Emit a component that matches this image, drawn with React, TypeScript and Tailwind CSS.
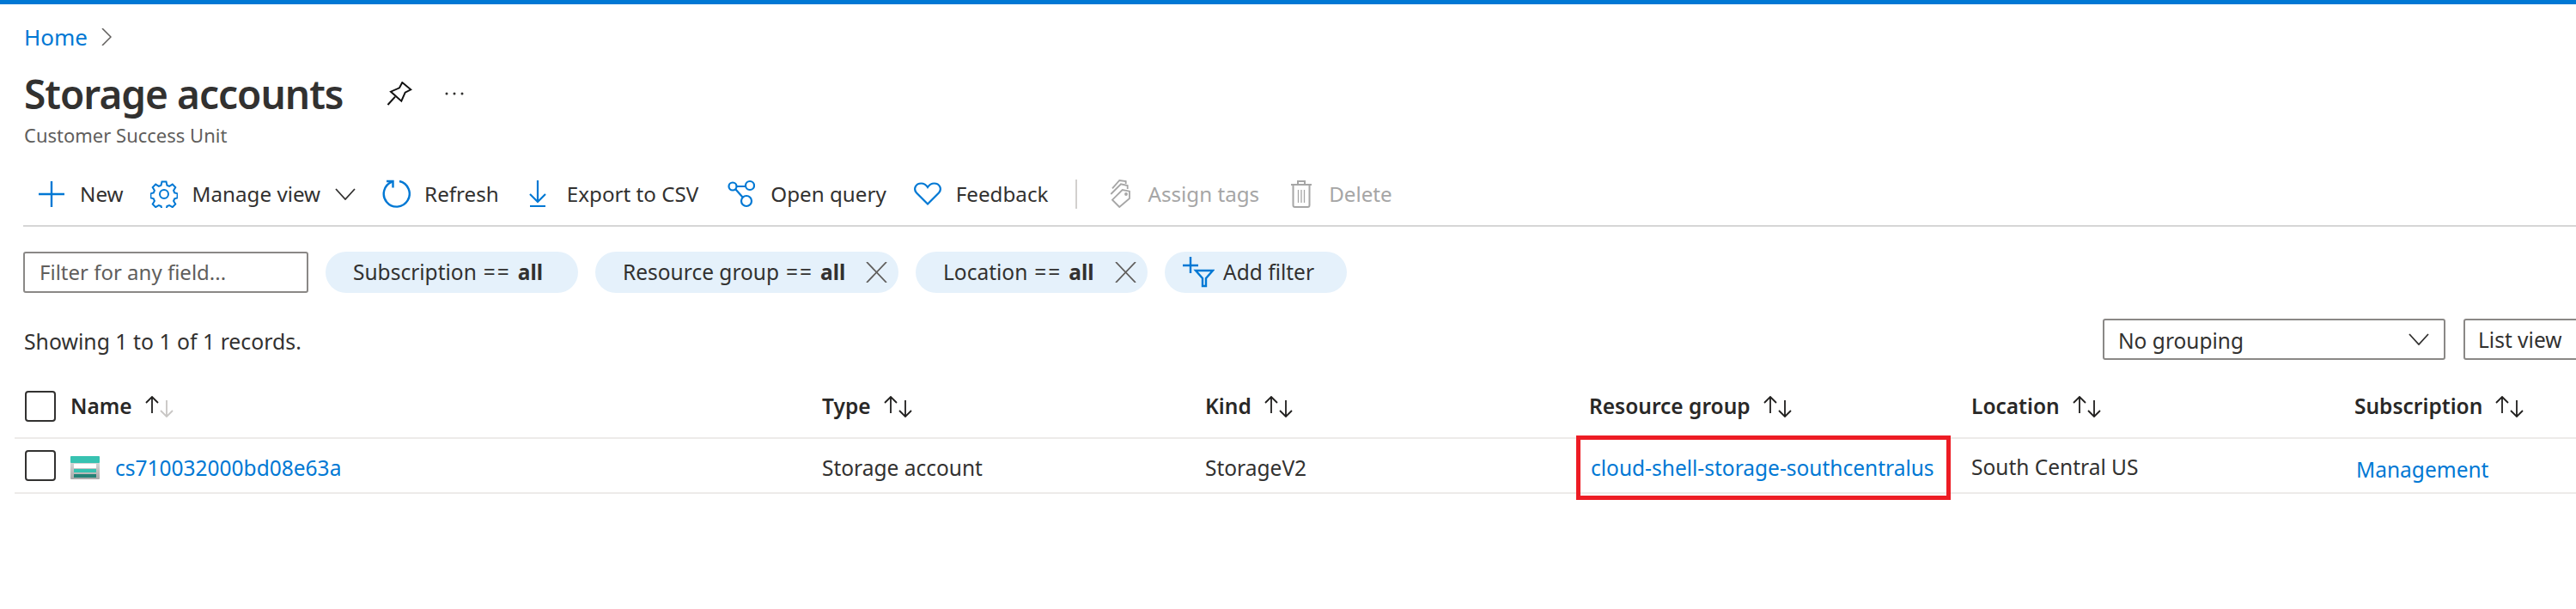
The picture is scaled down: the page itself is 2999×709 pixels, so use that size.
import type { ReactNode } from 'react';

const font = "font-['Noto_Sans','Open_Sans',sans-serif]";

function PlusIcon() {
  return (
    <svg width="30" height="30" viewBox="0 0 30 30" fill="none" stroke="#0078d4" strokeWidth="2.4">
      <path d="M15 0v30M0 15h30" />
    </svg>
  );
}

function GearIcon() {
  return (
    <svg width="32" height="32" viewBox="0 0 32 32" fill="none" stroke="#0078d4" strokeWidth="2">
      <circle cx="16" cy="16" r="5" />
      <path d="M13.5 1.5h5l1 4.2 2.6 1.1 3.7-2.2 3.5 3.5-2.2 3.700 1.100 2.600 3.400 1v5l-3.400 1-1.100 2.600 2.200 3.700-3.500 3.500-3.700-2.200-2.600 1.100-1 3.400h-5l-1-3.400-2.600-1.100-3.700 2.200-3.500-3.500 2.200-3.700-1.100-2.600-3.400-1v-5l3.400-1 1.100-2.600-2.200-3.700 3.500-3.500 3.700 2.200 2.600-1.100z" />
    </svg>
  );
}

function RefreshIcon() {
  return (
    <svg width="33" height="33" viewBox="0 0 33 33" fill="none" stroke="#0078d4" strokeWidth="2.4">
      <path d="M20 2.000A15 15 0 1 1 11.500 2.600" />
      <path d="M5 2H12.500V9.500" />
    </svg>
  );
}

function DownloadIcon() {
  return (
    <svg width="20" height="32" viewBox="0 0 20 32" fill="none" stroke="#0078d4" strokeWidth="2.200">
      <path d="M10 0v25M1 16l9 9 9-9M1 30h18" />
    </svg>
  );
}

function QueryIcon() {
  return (
    <svg width="32" height="33" viewBox="0 0 32 33" fill="none" stroke="#0078d4" strokeWidth="2.200">
      <circle cx="6" cy="8" r="4.500" />
      <circle cx="26" cy="7" r="5" />
      <circle cx="22" cy="25" r="6" />
      <path d="M10.500 8H21M9.500 11.500 17.500 20.500" />
    </svg>
  );
}

function HeartIcon() {
  return (
    <svg width="32" height="27" viewBox="0 0 32 27" fill="none" stroke="#0078d4" strokeWidth="2.200">
      <path d="M16 25.500 3 12.500C-1 8 2 1.500 8.500 1.500c3.500 0 5.500 1.500 7.500 4.500 2-3 4-4.500 7.500-4.500 6.500 0 9.500 6.500 5.500 11z" />
    </svg>
  );
}

function TagsIcon() {
  return (
    <svg width="27" height="33" viewBox="0 0 27 33" fill="none" stroke="#a6a6a6" strokeWidth="1.800">
      <path d="M5 10.300 13.300 1l7.400 1v3" />
      <path d="M3.300 17 15 5.300 22.700 7v4" />
      <path d="M13.300 32 5 23.700 16.700 12l8.300 1.700V22z" />
      <circle cx="21" cy="17" r="1" />
    </svg>
  );
}

function TrashIcon() {
  return (
    <svg width="24" height="33" viewBox="0 0 24 33" fill="none" stroke="#a6a6a6" strokeWidth="2">
      <path d="M0 6h24M2.500 6v24c0 1 .5 2 2 2h15c1.500 0 2-1 2-2V6M8 5.500V2h8v3.500" />
      <path d="M8.500 12v15M12 12v15M15.500 12v15" strokeWidth="1.300" />
    </svg>
  );
}

function PinIcon() {
  return (
    <svg width="29" height="28" viewBox="0 0 29 28" fill="none" stroke="#111" strokeWidth="2">
      <path d="M17.300 1 27.300 9.300 20.700 12.700 16.300 22.700 4 11.700 14 7.300z" />
      <path d="M0.500 27 9 17.700" />
    </svg>
  );
}

function MoreIcon() {
  return (
    <svg width="22" height="4" viewBox="0 0 22 4" fill="#323130">
      <circle cx="2" cy="2" r="1.500" />
      <circle cx="11" cy="2" r="1.500" />
      <circle cx="20" cy="2" r="1.500" />
    </svg>
  );
}

function CloseIcon() {
  return (
    <svg width="25" height="24" viewBox="0 0 25 24" fill="none" stroke="#605e5c" strokeWidth="1.800">
      <path d="M1 0 24 24M24 0 1 24" />
    </svg>
  );
}

function ChevronDown() {
  return (
    <svg width="24" height="14" viewBox="0 0 24 14" fill="none" stroke="#323130" strokeWidth="1.800">
      <path d="M1 1 12 13 23 1" />
    </svg>
  );
}

function AddFilterIcon() {
  return (
    <svg width="37" height="36" viewBox="0 0 37 36" fill="none" stroke="#0078d4" strokeWidth="2.400">
      <path d="M0 10h18M9 0v19" />
      <path d="M15 16h20L27 25v9h-4v-9z" />
    </svg>
  );
}

function SortArrows({ muted = false }: { muted?: boolean }) {
  return (
    <svg width="33" height="25" viewBox="0 0 33 25" fill="none" strokeWidth="1.800">
      <path d="M8 20V1M1 8l7-7 7 7" stroke="#201f1e" />
      <path d="M25 5v19M18 17l7 7 7-7" stroke={muted ? '#c8c6c4' : '#201f1e'} />
    </svg>
  );
}

function StorageIcon() {
  return (
    <svg width="34" height="27" viewBox="0 0 34 27">
      <defs>
        <linearGradient id="storageBody" x1="0" y1="0" x2="0" y2="1">
          <stop offset="0" stopColor="#e8e8e8" />
          <stop offset="1" stopColor="#a9a9a9" />
        </linearGradient>
      </defs>
      <rect width="34" height="27" rx="1" fill="url(#storageBody)" />
      <rect width="34" height="8" rx="1" fill="#37c2b1" />
      <rect x="4" y="9" width="26" height="5" fill="#fff" />
      <rect x="4" y="15" width="26" height="4" fill="#37c2b1" />
      <rect x="4" y="21" width="26" height="4" fill="#258277" />
    </svg>
  );
}

function Action({ icon, label, disabled, className, children }: { icon: ReactNode; label: string; disabled?: boolean; className: string; children?: ReactNode }) {
  return (
    <div className={`flex items-center ${className} ${disabled ? 'text-[#a6a6a6]' : 'text-[#323130]'}`}>
      {icon}
      <span>{label}</span>
      {children}
    </div>
  );
}

function Pill({ label, closable, w }: { label: string; closable?: boolean; w: string }) {
  return (
    <div className={`flex h-[48px] items-center justify-between rounded-full bg-[#e5f1fb] pl-[32px] pr-[13px] ${w}`}>
      <span>
        {label}
        <span className="mx-[8px] tracking-[2px]">==</span>
        <b className="font-bold">all</b>
      </span>
      {closable && <CloseIcon />}
    </div>
  );
}

function HeaderCell({ label, children }: { label: string; children?: ReactNode }) {
  return (
    <div className="flex items-center gap-[15px] font-semibold text-[#292827]">
      <span>{label}</span>
      {children ?? <SortArrows />}
    </div>
  );
}

function Checkbox() {
  return <div className="h-[36px] w-[36px] rounded-[4px] border-2 border-[#323130]" />;
}

export default function App() {
  return (
    <div className={`h-[709px] w-[2999px] overflow-hidden bg-white text-[24.5px] text-[#323130] ${font}`}>
      <div className="h-[5px] bg-[#0078d4]" />

      <div className="flex h-[76px] items-center gap-[16px] pl-[28px]">
        <span className="text-[26px] text-[#0078d4]">Home</span>
        <svg width="12" height="20" viewBox="0 0 12 20" fill="none" stroke="#605e5c" strokeWidth="1.500">
          <path d="M1 0l10 10-10 10" />
        </svg>
      </div>

      <div className="flex h-[56px] items-center pl-[28px]">
        <h1 className="w-[423px] text-[46px] font-semibold tracking-[-1px] text-[#323130]">Storage accounts</h1>
        <PinIcon />
        <div className="ml-[38px]">
          <MoreIcon />
        </div>
      </div>

      <div className="flex h-[40px] items-center pl-[28px] text-[22px] text-[#605e5c]">Customer Success Unit</div>

      <div className="ml-[27px] flex h-[87px] items-center border-b-2 border-[#d6d6d6] pl-[18px] pt-[13px] text-[24.2px]">
        <Action icon={<PlusIcon />} label="New" className="gap-[18px]" />
        <Action icon={<GearIcon />} label="Manage view" className="ml-[31px] gap-[17px]">
          <ChevronDown />
        </Action>
        <Action icon={<RefreshIcon />} label="Refresh" className="ml-[31px] gap-[16px]" />
        <Action icon={<DownloadIcon />} label="Export to CSV" className="ml-[35px] gap-[24px]" />
        <Action icon={<QueryIcon />} label="Open query" className="ml-[34px] gap-[18px]" />
        <Action icon={<HeartIcon />} label="Feedback" className="ml-[32px] gap-[17px]" />
        <div className="ml-[32px] h-[34px] w-[2px] bg-[#d2d0ce]" />
        <Action icon={<TagsIcon />} label="Assign tags" disabled className="ml-[36px] gap-[19px]" />
        <Action icon={<TrashIcon />} label="Delete" disabled className="ml-[37px] gap-[20px]" />
      </div>

      <div className="mt-[29px] flex items-center gap-[20px] pl-[27px]">
        <div className="flex h-[48px] w-[332px] items-center rounded-[3px] border-2 border-[#8a8886] pl-[17px] text-[24px] text-[#605e5c]">Filter for any field...</div>
        <Pill label="Subscription" w="w-[294px]" />
        <Pill label="Resource group" closable w="w-[353px]" />
        <Pill label="Location" closable w="w-[270px]" />
        <div className="flex h-[48px] w-[212px] items-center gap-[10px] rounded-full bg-[#e5f1fb] pl-[21px]">
          <AddFilterIcon />
          <span>Add filter</span>
        </div>
      </div>

      <div className="mt-[30px] flex h-[48px] items-center justify-between pl-[28px]">
        <span className="pt-[5px] text-[24.8px]">Showing 1 to 1 of 1 records.</span>
        <div className="flex w-[551px] shrink-0 gap-[21px]">
          <div className="flex h-[48px] w-[399px] shrink-0 items-center justify-between rounded-[3px] border-2 border-[#8a8886] pl-[16px] pr-[17px]">
            <span className="pt-[4px]">No grouping</span>
            <ChevronDown />
          </div>
          <div className="flex h-[48px] w-[150px] shrink-0 items-center rounded-[3px] border-2 border-[#8a8886] pl-[15px]">
            <span className="pt-[2px]">List view</span>
          </div>
        </div>
      </div>

      <div className="ml-[17px] mt-[22px]">
        <div className="grid h-[70px] grid-cols-[928px_446px_447px_445px_446px_1fr] items-center border-b-2 border-[#edebe9] pb-[4px] pl-[12px]">
          <div className="flex items-center gap-[17px]">
            <Checkbox />
            <HeaderCell label="Name">
              <SortArrows muted />
            </HeaderCell>
          </div>
          <HeaderCell label="Type" />
          <HeaderCell label="Kind" />
          <HeaderCell label="Resource group" />
          <HeaderCell label="Location" />
          <HeaderCell label="Subscription" />
        </div>
        <div className="grid h-[64px] grid-cols-[928px_446px_447px_445px_446px_1fr] items-center border-b-2 border-[#edebe9] pl-[12px]">
          <div className="flex items-center">
            <Checkbox />
            <div className="ml-[17px] mr-[18px] pt-[4px]">
              <StorageIcon />
            </div>
            <span className="pt-[6px] text-[#0078d4]">cs710032000bd08e63a</span>
          </div>
          <span className="pt-[6px]">Storage account</span>
          <span className="pt-[6px]">StorageV2</span>
          <div className="relative flex items-center self-stretch pl-[2px] pt-[6px] text-[#0078d4]">
            <span>cloud-shell-storage-southcentralus</span>
            <div className="absolute -left-[15px] -top-[4px] h-[75px] w-[436px] border-[5px] border-[#ed1c24]" />
          </div>
          <span className="pt-[5px]">South Central US</span>
          <span className="pl-[2px] pt-[10px] text-[#0078d4]">Management</span>
        </div>
      </div>
    </div>
  );
}
